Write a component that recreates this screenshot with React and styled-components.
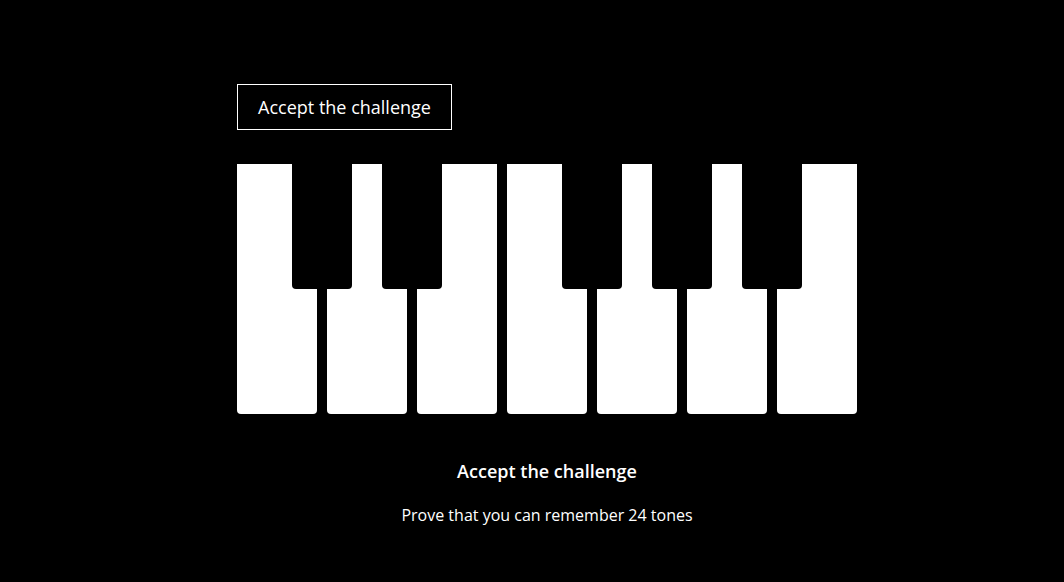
import React from 'react';
import styled, { createGlobalStyle } from 'styled-components';

const GlobalStyle = createGlobalStyle`
    html, body {
        margin: 0;
        padding: 0;
        background: #000;
    }
    body {
        font-family: 'Open Sans', 'Liberation Sans', sans-serif;
        color: #fff;
    }
`;

const Page = styled.div`
    min-height: 582px;
    padding: 84px 0 0 30px;
    box-sizing: border-box;
`;

const Column = styled.div`
    width: 620px;
    margin: 0 auto;
    display: flex;
    flex-direction: column;
`;

const ChallengeButton = styled.button`
    align-self: flex-start;
    width: 215px;
    height: 46px;
    background: transparent;
    border: 1px solid #fff;
    color: #fff;
    font-family: inherit;
    font-size: 18px;
    padding: 0;
    cursor: pointer;
`;

const Keyboard = styled.div`
    position: relative;
    margin-top: 34px;
    display: flex;
    gap: 10px;
    height: 250px;
`;

const WhiteKey = styled.div`
    width: 80px;
    height: 100%;
    background: #fff;
    border-radius: 0 0 4px 4px;
`;

const BlackKey = styled.div`
    position: absolute;
    top: 0;
    left: ${p => p.$left}px;
    width: 60px;
    height: 125px;
    background: #000;
    border-radius: 0 0 4px 4px;
`;

const Title = styled.h2`
    margin: 44px 0 0;
    text-align: center;
    font-size: 18px;
    font-weight: 600;
    line-height: 26px;
`;

const Subtitle = styled.p`
    margin: 20px 0 0;
    text-align: center;
    font-size: 16px;
    line-height: 22px;
`;

const whiteKeys = ['C', 'D', 'E', 'F', 'G', 'A', 'B'];
const blackAfter = [0, 1, 3, 4, 5];

const App = () => (
    <>
        <GlobalStyle />
        <Page>
            <Column>
                <ChallengeButton>Accept the challenge</ChallengeButton>
                <Keyboard>
                    {whiteKeys.map(k => <WhiteKey key={k} />)}
                    {blackAfter.map(i => <BlackKey key={i} $left={i * 90 + 55} />)}
                </Keyboard>
                <Title>Accept the challenge</Title>
                <Subtitle>Prove that you can remember 24 tones</Subtitle>
            </Column>
        </Page>
    </>
);

export default App;
